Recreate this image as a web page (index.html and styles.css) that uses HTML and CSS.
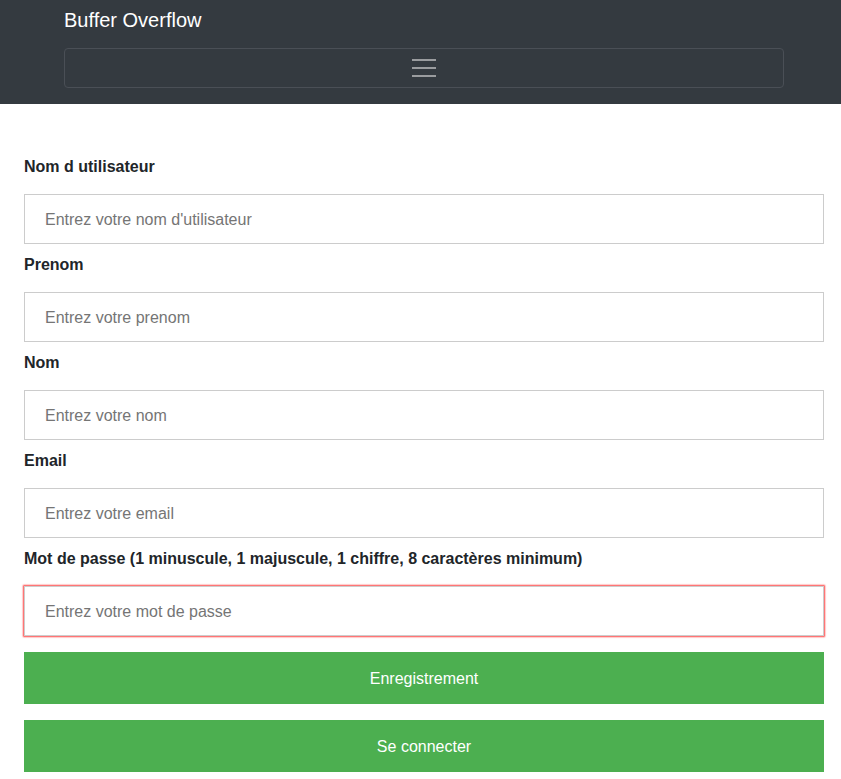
FILE: index.html
```html
<!DOCTYPE html>
<html lang="fr">
<head>
<meta charset="utf-8">
<title>Buffer Overflow</title>
<link rel="stylesheet" href="styles.css">
</head>
<body>
<nav class="navbar">
  <a class="brand" href="#">Buffer Overflow</a>
  <button class="toggler" type="button" aria-label="Menu">
    <svg width="24" height="20" viewBox="0 0 24 20" aria-hidden="true">
      <rect x="0" y="1" width="24" height="2" fill="#9a9c9f"/>
      <rect x="0" y="9" width="24" height="2" fill="#9a9c9f"/>
      <rect x="0" y="17" width="24" height="2" fill="#9a9c9f"/>
    </svg>
  </button>
</nav>
<form class="form">
  <label class="label">Nom d utilisateur</label>
  <input class="input" type="text" placeholder="Entrez votre nom d'utilisateur">
  <label class="label">Prenom</label>
  <input class="input" type="text" placeholder="Entrez votre prenom">
  <label class="label">Nom</label>
  <input class="input" type="text" placeholder="Entrez votre nom">
  <label class="label">Email</label>
  <input class="input" type="text" placeholder="Entrez votre email">
  <label class="label">Mot de passe (1 minuscule, 1 majuscule, 1 chiffre, 8 caractères minimum)</label>
  <input class="input input-invalid" type="password" placeholder="Entrez votre mot de passe">
  <button class="btn" type="button">Enregistrement</button>
  <button class="btn" type="button">Se connecter</button>
</form>
</body>
</html>
```
FILE: styles.css
```css
html, body {
  margin: 0;
  padding: 0;
  background: #fff;
  font-family: "Liberation Sans", Arial, sans-serif;
  color: #212529;
}
.navbar {
  background: #343a40;
  height: 104px;
  box-sizing: border-box;
  padding: 5px 57px 16px 64px;
  display: flex;
  flex-direction: column;
  align-items: stretch;
}
.brand {
  color: #fff;
  text-decoration: none;
  font-size: 20px;
  line-height: 30px;
  height: 30px;
  margin-bottom: 13px;
  align-self: flex-start;
}
.toggler {
  height: 40px;
  box-sizing: border-box;
  background: transparent;
  border: 1px solid #4a4f56;
  border-radius: 4px;
  display: flex;
  align-items: center;
  justify-content: center;
  padding: 0;
}
.toggler svg { display: block; margin-top: -1px; }
.form {
  display: flex;
  flex-direction: column;
  padding: 53px 17px 0 24px;
}
.label {
  display: block;
  font-weight: bold;
  font-size: 16px;
  line-height: 20px;
  height: 20px;
  margin-bottom: 17px;
  color: #212529;
}
.input {
  display: block;
  box-sizing: border-box;
  width: 100%;
  height: 50px;
  border: 1px solid #ccc;
  padding: 2px 20px 0 20px;
  font-family: "Liberation Sans", Arial, sans-serif;
  font-size: 16px;
  margin: 0 0 11px 0;
  outline: none;
  background: #fff;
}
.input::placeholder { color: #757575; opacity: 1; }
.input-invalid {
  box-shadow: 0 0 1.5px 1px rgba(255, 70, 70, 1);
  margin-bottom: 16px;
}
.btn {
  display: block;
  width: 100%;
  height: 52px;
  border: none;
  background: #4caf50;
  color: #fff;
  font-family: "Liberation Sans", Arial, sans-serif;
  font-size: 16px;
  margin: 0 0 16px 0;
  padding: 2px 0 0 0;
  cursor: pointer;
}
```
